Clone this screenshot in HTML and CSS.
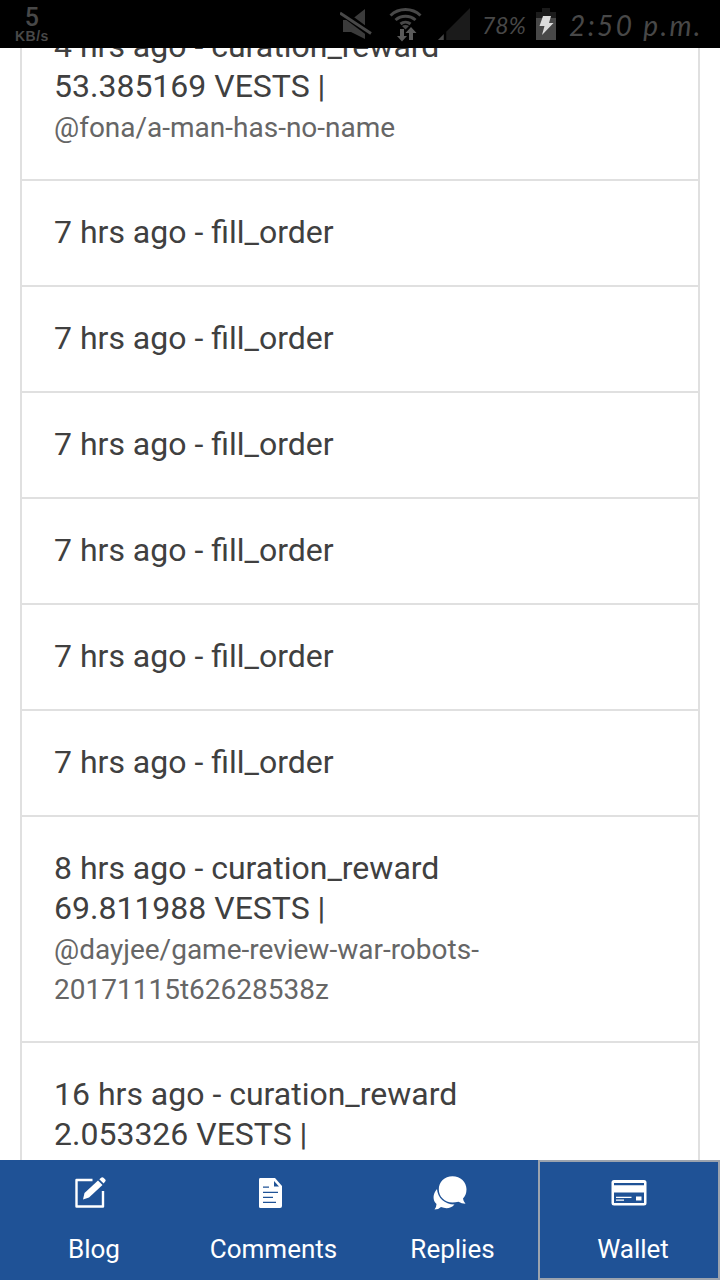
FILE: index.html
```html
<!DOCTYPE html>
<html lang="en">
<head>
    <meta charset="utf-8" />
    <title>Wallet</title>
    <link rel="stylesheet" href="styles.css">
</head>
<body>

<div class="statusbar">
    <div class="speed"><span class="num">5</span><span class="unit">KB/s</span></div>
    <div class="indicators">
        <svg class="mute" width="32" height="32" viewBox="0 0 32 32">
            <path d="M3 12h8L25 1v30L11 24H3z" fill="#3b3b3b" />
            <path d="M0 3L31 26" stroke="#000" stroke-width="7" />
            <path d="M0 5L31 25.500" stroke="#484848" stroke-width="3" />
        </svg>
        <svg class="wifi" width="34" height="36" viewBox="0 0 34 36">
            <g fill="none" stroke="#484848" stroke-width="3">
                <path d="M1.500 9.500a22 22 0 0 1 30 0" />
                <path d="M6.500 14a15 15 0 0 1 20 0" />
                <path d="M11.500 18a8 8 0 0 1 10 0" />
            </g>
            <path d="M13 20q3.500-2 7 0l-3.500 3.500z" fill="#484848" />
            <path d="M11 23h4v7h3l-5 5.500L8 30h3zM20 34h4v-7h3.500L22 21l-5.500 6H20z" fill="#5a5a5a" />
        </svg>
        <svg class="signal" width="32" height="32" viewBox="0 0 32 32">
            <path d="M0 32L32 0v32z" fill="#1b1b1b" />
            <path d="M0 32l6-6v6z" fill="#484848" />
            <path d="M7 24v8" stroke="#000" stroke-width="2.500" />
        </svg>
        <span class="percent">78%</span>
        <svg class="battery" width="20" height="32" viewBox="0 0 20 32">
            <path d="M6 0h8v4h6v6H0V4h6z" fill="#1b1b1b" />
            <path d="M0 10h20v22H0z" fill="#484848" />
            <path d="M7 8h8l-2 7h4.500L6 27l2.500-9H3.500z" fill="#ddd" />
        </svg>
        <span class="clock">2:50 p.m.</span>
    </div>
</div>

<div class="history">
    <div class="item">
        <div class="title">4 hrs ago - curation_reward</div>
        <div class="title">53.385169 VESTS |</div>
        <div class="link">@fona/a-man-has-no-name</div>
    </div>
    <div class="item"><div class="title">7 hrs ago - fill_order</div></div>
    <div class="item"><div class="title">7 hrs ago - fill_order</div></div>
    <div class="item"><div class="title">7 hrs ago - fill_order</div></div>
    <div class="item"><div class="title">7 hrs ago - fill_order</div></div>
    <div class="item"><div class="title">7 hrs ago - fill_order</div></div>
    <div class="item"><div class="title">7 hrs ago - fill_order</div></div>
    <div class="item">
        <div class="title">8 hrs ago - curation_reward</div>
        <div class="title">69.811988 VESTS |</div>
        <div class="link">@dayjee/game-review-war-robots-<br />20171115t62628538z</div>
    </div>
    <div class="item">
        <div class="title">16 hrs ago - curation_reward</div>
        <div class="title">2.053326 VESTS |</div>
    </div>
</div>

<div class="tabs">
    <div class="tab">
        <svg width="36" height="36" viewBox="0 0 36 36">
            <path d="M20.500 5H4.500v26.500H31V16" fill="none" stroke="#fff" stroke-width="2.400" stroke-linejoin="round" />
            <path d="M11 24.500l1.500-6.500L26 5.500l4.500 4.500L17 22.500z" fill="#fff" />
            <path d="M27.300 4.300l2.200-1.800q1-.7 2 .3l1.800 1.800q.9 1-.1 2l-1.600 2z" fill="#fff" />
        </svg>
        <span>Blog</span>
    </div>
    <div class="tab">
        <svg width="36" height="36" viewBox="0 0 36 36">
            <path d="M8 3h15L30 11V31q0 2-2 2H8.500q-1.500 0-1.500-1.500V4.500Q7 3 8 3z" fill="#fff" />
            <path d="M22 6v5.500h5z" fill="#1f5296" />
            <path d="M11 12.200h6M11 17.300h15M11 22.300h10M11 27.300h13" stroke="#1f5296" stroke-width="1.200" />
        </svg>
        <span>Comments</span>
    </div>
    <div class="tab">
        <svg width="36" height="36" viewBox="0 0 36 36">
            <path d="M6 14C1.500 19 1.500 25.500 5.500 29q0 3-2 5.500 4 0 6.500-2.500c5 2 10 1.500 13.500-2.500C13.500 29.500 6.500 22.500 6 14z" fill="#fff" />
            <path d="M21.500 1.200c8 0 14 5.800 14 13.100 0 4.500-1.500 7-3.500 9.200q.3 3 2.500 5.200-4 0-7-2-3 .8-6 .8C13.500 27.500 7.800 21.600 7.800 14.300S13.500 1.200 21.500 1.200z" fill="#fff" />
        </svg>
        <span>Replies</span>
    </div>
    <div class="tab active">
        <svg width="36" height="36" viewBox="0 0 36 36">
            <rect x=".5" y="5" width="35" height="25.500" rx="2.500" fill="#fff" />
            <path d="M3 8h30v2.200H3zM3 17.500h30V28H3z" fill="#1f5296" />
            <path d="M5 22.300h15.500M5 25.200h8" stroke="#fff" stroke-width="1.300" />
            <path d="M25 21.500h5.500v4H25z" fill="#fff" />
        </svg>
        <span>Wallet</span>
    </div>
</div>

</body>
</html>
```
FILE: styles.css
```css
html, body {
    margin: 0;
    padding: 0;
    }
body {
    display: flex;
    flex-direction: column;
    width: 720px;
    height: 1280px;
    overflow: hidden;
    background: #fff;
    font-family: Roboto, "Liberation Sans", sans-serif;
    }

/* Status bar */
.statusbar {
    display: flex;
    flex: none;
    justify-content: space-between;
    box-sizing: border-box;
    height: 48px;
    padding: 0 18px 0 15px;
    background: #000;
    color: #484848;
    }
.speed {
    display: flex;
    flex-direction: column;
    align-items: center;
    padding-top: 6px;
    font-family: "Liberation Sans", sans-serif;
    font-weight: bold;
    }
.speed .num {
    font-family: Roboto, sans-serif;
    font-size: 25px;
    font-weight: 500;
    line-height: 23px;
    }
.speed .unit {
    font-size: 14px;
    line-height: 14px;
    letter-spacing: .5px;
    }
.indicators {
    display: flex;
    align-items: flex-start;
    padding-top: 8px;
    }
.wifi { margin: -2px 0 0 17px; }
.signal { margin-left: 15px; }
.percent, .clock {
    box-sizing: border-box;
    font-family: Lato, "Liberation Sans", sans-serif;
    font-style: italic;
    line-height: 34px;
    white-space: nowrap;
    }
.percent {
    width: 53px;
    padding-left: 12px;
    font-size: 23px;
    }
.battery { margin-left: 13px; }
.clock {
    width: 146px;
    padding-left: 13px;
    font-size: 28px;
    letter-spacing: 2.4px;
    }

/* Account history */
.history {
    display: flex;
    flex: 1;
    flex-direction: column;
    min-height: 0;
    margin: 0 20px;
    overflow: hidden;
    border: solid #e0e0e0;
    border-width: 0 2px;
    }
.item {
    flex: none;
    padding: 31px 32px 33px;
    border-bottom: 2px solid #e0e0e0;
    }
.item:first-child { margin-top: -22px; padding-top: 0; }
.title {
    color: #404040;
    font-size: 32px;
    line-height: 40px;
    }
.link {
    margin: 2px 0 -2px;
    color: #666;
    font-size: 28px;
    line-height: 40px;
    }

/* Bottom tabs */
.tabs {
    display: grid;
    flex: none;
    grid-template-columns: 180px 179px 179px 182px;
    height: 120px;
    background: #1f5296;
    color: #fff;
    }
.tab {
    display: flex;
    flex-direction: column;
    align-items: center;
    box-sizing: border-box;
    padding-top: 15px;
    font-size: 26px;
    line-height: 30px;
    }
.tab span {
    margin-top: 23px;
    padding-left: 8px;
    }
.active {
    padding-top: 13px;
    border: 2px solid #9ba3ae;
    }
```
